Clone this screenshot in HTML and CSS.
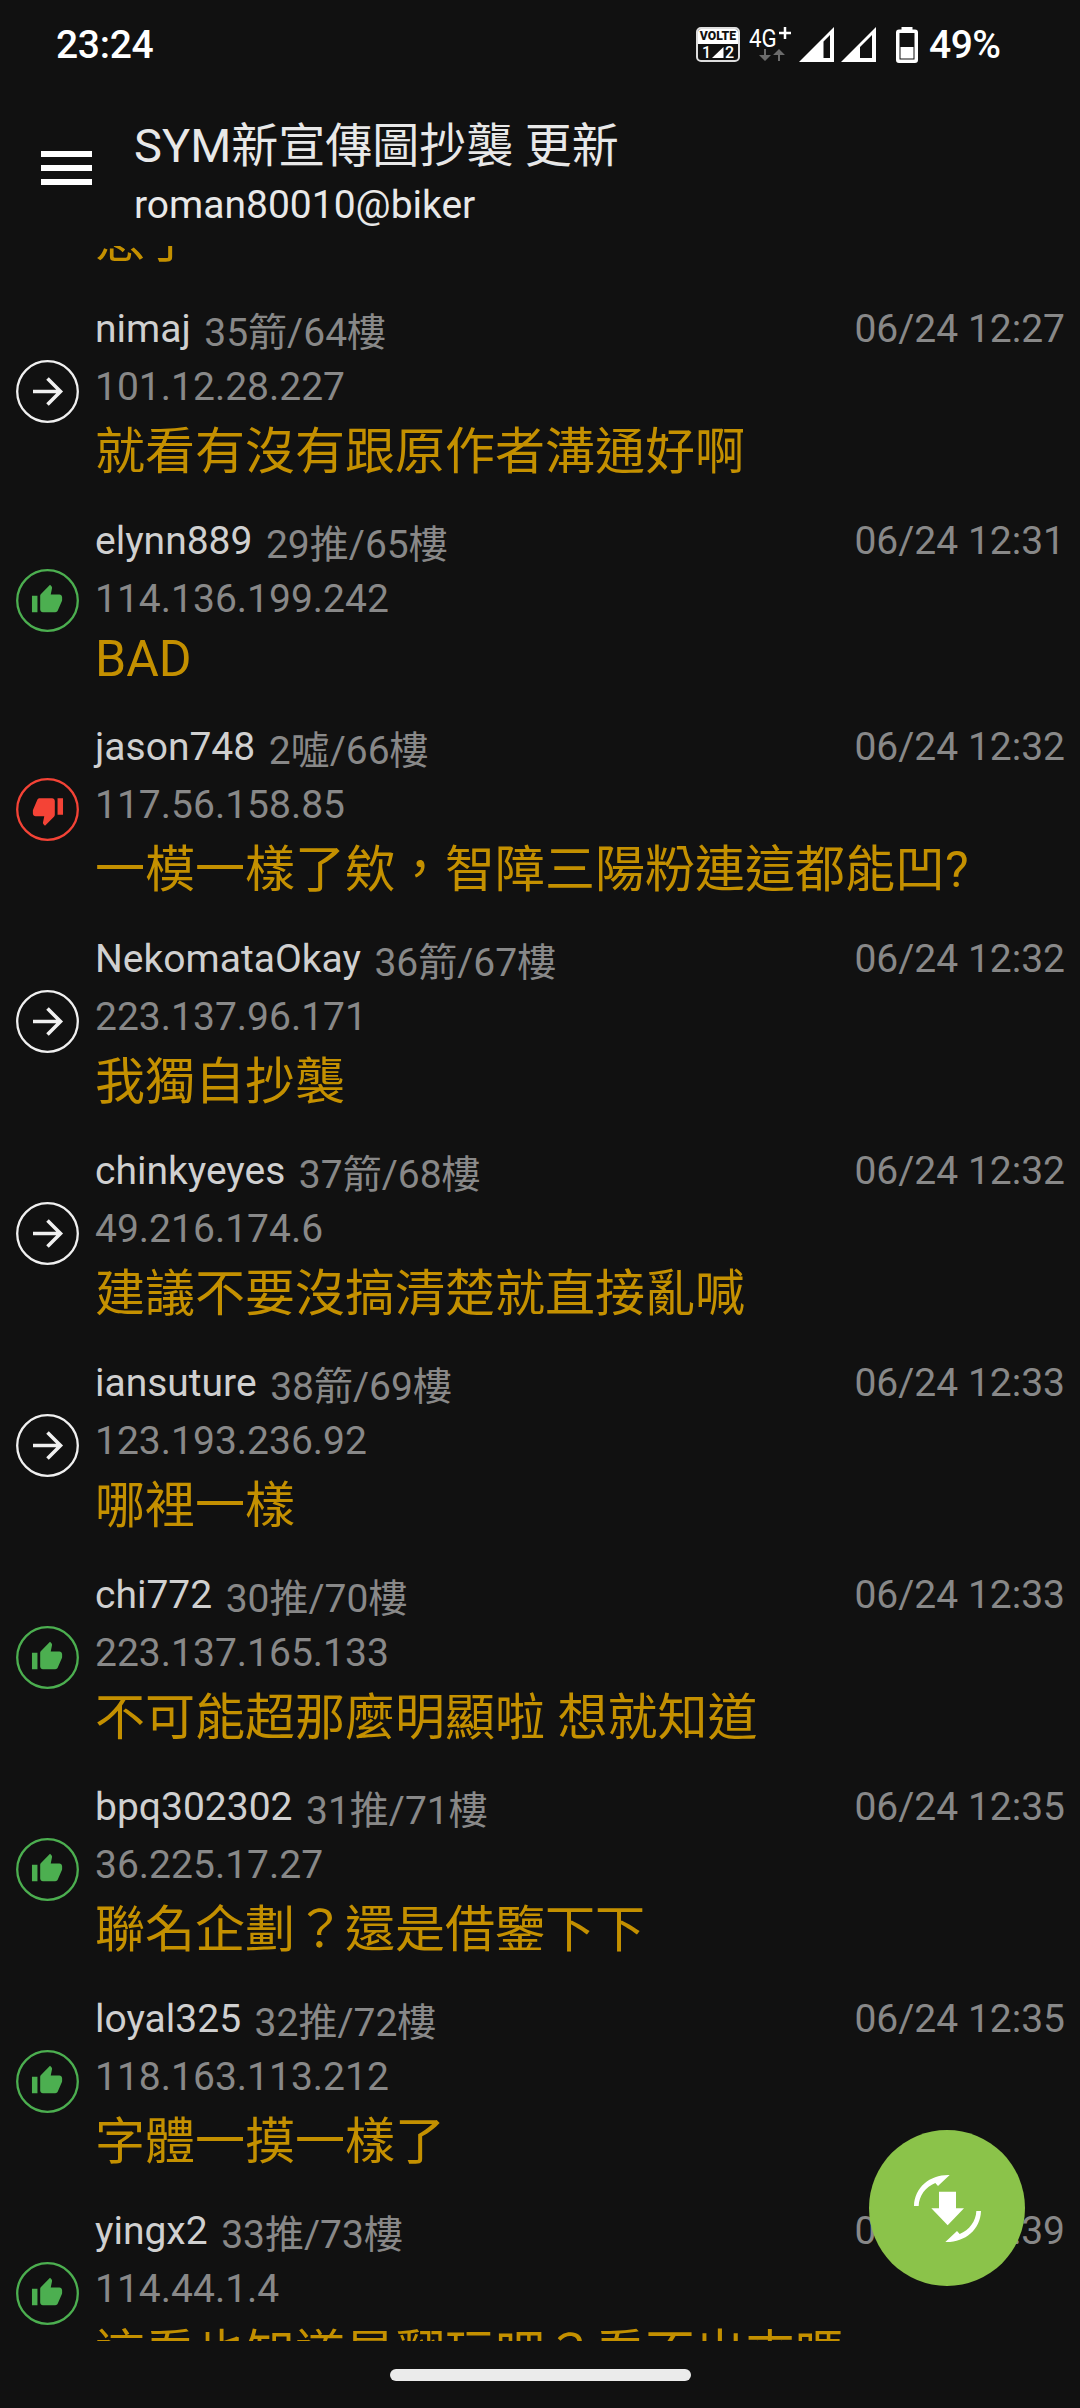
FILE: index.html
```
<!DOCTYPE html>
<html lang="zh-Hant">
<head>
<meta charset="utf-8">
<title>SYM新宣傳圖抄襲 更新</title>
<link rel="stylesheet" href="styles.css">
</head>
<body>
<svg class="defs" width="0" height="0">
  <symbol id="arrow" viewBox="0 0 63 63">
    <circle cx="31.5" cy="31.5" r="30.3" fill="none" stroke="currentColor" stroke-width="2.3"/>
    <path d="M17 31.5H44M31.5 18.5L44.5 31.5L31.5 44.5" fill="none" stroke="currentColor" stroke-width="3.6"/>
  </symbol>
  <symbol id="up" viewBox="0 0 63 63">
    <circle cx="31.5" cy="31.5" r="30.3" fill="none" stroke="currentColor" stroke-width="2.3"/>
    <path transform="translate(14.6 14.5) scale(1.37)" d="M1 21h4V9H1v12zm22-11c0-1.100-.9-2-2-2h-6.310l.95-4.570.03-.32c0-.41-.17-.79-.44-1.060L14.170 1 7.590 7.590C7.220 7.950 7 8.450 7 9v10c0 1.100.9 2 2 2h9c.83 0 1.540-.5 1.840-1.220l3.020-7.050c.09-.23.14-.47.14-.73v-2z" fill="currentColor"/>
  </symbol>
  <symbol id="down" viewBox="0 0 63 63">
    <circle cx="31.5" cy="31.5" r="30.3" fill="none" stroke="currentColor" stroke-width="2.3"/>
    <path transform="translate(48.4 49.1) scale(-1.37)" d="M1 21h4V9H1v12zm22-11c0-1.100-.9-2-2-2h-6.310l.95-4.570.03-.32c0-.41-.17-.79-.44-1.060L14.170 1 7.590 7.590C7.220 7.950 7 8.450 7 9v10c0 1.100.9 2 2 2h9c.83 0 1.540-.5 1.840-1.220l3.020-7.050c.09-.23.14-.47.14-.73v-2z" fill="currentColor"/>
  </symbol>
</svg>
<div class="screen">
  <div class="statusbar">
    <span class="clock">23:24</span>
    <div class="volte"><span class="volte-label">VOLTE</span><span class="volte-sims"><span>1</span><svg width="12" height="11"><path d="M0 11L11.500 0V11z" fill="#fff"/></svg><span>2</span></span></div>
    <div class="network"><div class="gen"><span>4G</span><svg width="12" height="12" viewBox="0 0 12 12"><path d="M6 0V12M0 6H12" stroke="#fff" stroke-width="2.500"/></svg></div>
      <svg class="traffic" width="26" height="12" viewBox="0 0 26 12" fill="#6b6b6b"><path d="M5 0h2v6H12L6 12 0 6h5zM19 12h2V6H26L20 0l-6 6h5z"/></svg>
    </div>
    <svg class="signal" width="35" height="35" viewBox="0 0 35 35"><path fill="#fff" fill-rule="evenodd" d="M0 35L35 0V35zM24.500 14.500V31H31V8z"/></svg>
    <svg class="signal second" width="35" height="35" viewBox="0 0 35 35"><path fill="#fff" fill-rule="evenodd" d="M0 35L35 0V35zM19 20V31H31V8z"/></svg>
    <svg class="battery" width="22" height="36" viewBox="0 0 22 36"><path fill="#fff" fill-rule="evenodd" d="M5.500 0h11v2.500h2.500q3 0 3 3v27.500q0 3-3 3H3q-3 0-3-3V5.500q0-3 3-3h2.500zM3.500 6V32.500H18.500V6z"/><path fill="#fff" d="M4.500 20h13v11.500h-13z"/></svg>
    <span class="percent">49%</span>
  </div>
  <header class="topbar">
    <div class="menu"><i></i><i></i><i></i></div>
    <div class="heading">
      <div class="title">SYM新宣傳圖抄襲 更新</div>
      <div class="subtitle">roman80010@biker</div>
    </div>
  </header>
  <main class="comments">
    <div class="leading"><p class="msg">急了</p></div>
    <article class="row"><svg class="badge plain"><use href="#arrow"/></svg><div class="body"><div class="meta"><span class="name">nimaj</span><span class="floor">35箭/64樓</span><time>06/24 12:27</time></div><div class="ip">101.12.28.227</div><p class="msg">就看有沒有跟原作者溝通好啊</p></div></article>
    <article class="row"><svg class="badge push"><use href="#up"/></svg><div class="body"><div class="meta"><span class="name">elynn889</span><span class="floor">29推/65樓</span><time>06/24 12:31</time></div><div class="ip">114.136.199.242</div><p class="msg latin">BAD</p></div></article>
    <article class="row"><svg class="badge boo"><use href="#down"/></svg><div class="body"><div class="meta"><span class="name">jason748</span><span class="floor">2噓/66樓</span><time>06/24 12:32</time></div><div class="ip">117.56.158.85</div><p class="msg">一模一樣了欸，智障三陽粉連這都能凹?</p></div></article>
    <article class="row"><svg class="badge plain"><use href="#arrow"/></svg><div class="body"><div class="meta"><span class="name">NekomataOkay</span><span class="floor">36箭/67樓</span><time>06/24 12:32</time></div><div class="ip">223.137.96.171</div><p class="msg">我獨自抄襲</p></div></article>
    <article class="row"><svg class="badge plain"><use href="#arrow"/></svg><div class="body"><div class="meta"><span class="name">chinkyeyes</span><span class="floor">37箭/68樓</span><time>06/24 12:32</time></div><div class="ip">49.216.174.6</div><p class="msg">建議不要沒搞清楚就直接亂喊</p></div></article>
    <article class="row"><svg class="badge plain"><use href="#arrow"/></svg><div class="body"><div class="meta"><span class="name">iansuture</span><span class="floor">38箭/69樓</span><time>06/24 12:33</time></div><div class="ip">123.193.236.92</div><p class="msg">哪裡一樣</p></div></article>
    <article class="row"><svg class="badge push"><use href="#up"/></svg><div class="body"><div class="meta"><span class="name">chi772</span><span class="floor">30推/70樓</span><time>06/24 12:33</time></div><div class="ip">223.137.165.133</div><p class="msg">不可能超那麼明顯啦 想就知道</p></div></article>
    <article class="row"><svg class="badge push"><use href="#up"/></svg><div class="body"><div class="meta"><span class="name">bpq302302</span><span class="floor">31推/71樓</span><time>06/24 12:35</time></div><div class="ip">36.225.17.27</div><p class="msg">聯名企劃？還是借鑒下下</p></div></article>
    <article class="row"><svg class="badge push"><use href="#up"/></svg><div class="body"><div class="meta"><span class="name">loyal325</span><span class="floor">32推/72樓</span><time>06/24 12:35</time></div><div class="ip">118.163.113.212</div><p class="msg">字體一摸一樣了</p></div></article>
    <article class="row"><svg class="badge push"><use href="#up"/></svg><div class="body"><div class="meta"><span class="name">yingx2</span><span class="floor">33推/73樓</span><time>06/24 12:39</time></div><div class="ip">114.44.1.4</div><p class="msg">這看也知道是翻玩吧？看不出來嗎</p></div></article>
  </main>
  <footer class="navbar"><div class="pill"></div></footer>
  <div class="fab">
    <svg width="156" height="156" viewBox="0 0 468 468" fill="#fff">
      <path d="M210 185H261V235H285L236 286L187 235H210z"/>
      <path id="sweep" d="M135 228C137 170 185 133 242 135L207 168L199 159C170 170 150 198 149 228z"/>
      <use href="#sweep" transform="rotate(180 235.500 235.500)"/>
    </svg>
  </div>
</div>
</body>
</html>
```
FILE: styles.css
```
* { box-sizing: border-box; }
body { margin: 0; background: #111; }
.defs { display: block; position: absolute; }
.screen {
  position: relative;
  width: 1080px;
  height: 2408px;
  display: flex;
  flex-direction: column;
  overflow: hidden;
  background: #111;
  color: #ccc;
  font-family: Roboto, "Noto Sans CJK TC", sans-serif;
  font-size: 39px;
  line-height: 46px;
  white-space: nowrap;
}
.statusbar {
  flex: none;
  height: 89px;
  display: flex;
  align-items: flex-start;
  padding: 22px 0 0 56px;
  color: #fff;
  font-weight: 500;
}
.clock { width: 640px; letter-spacing: -0.3px; }
.volte {
  width: 44px;
  height: 35px;
  margin-top: 5px;
  border: 2px solid #ddd;
  border-radius: 5px;
  overflow: hidden;
}
.volte-label {
  display: block;
  height: 15px;
  background: #fff;
  color: #111;
  font-size: 12.2px;
  font-weight: 900;
  line-height: 15px;
  text-align: center;
}
.volte-sims {
  display: flex;
  justify-content: center;
  align-items: center;
  gap: 1px;
  height: 17px;
  font-size: 16px;
  line-height: 17px;
}
.network {
  width: 44px;
  margin: 4px 0 0 9px;
}
.gen {
  display: flex;
  height: 23px;
  font-size: 26.5px;
  font-weight: 400;
  line-height: 23px;
}
.gen span { width: 30px; transform: scaleX(0.84); transform-origin: 0 0; }
.gen svg { margin-top: 1px; }
.traffic { display: block; margin-left: 10px; }
.signal { margin: 5px 0 0 6px; }
.signal.second { margin-left: 7px; }
.battery { margin: 5px 0 0 20px; }
.percent { margin-left: 11px; letter-spacing: -0.5px; }

.topbar {
  flex: none;
  height: 157px;
  display: flex;
  padding-left: 41px;
  color: #e8e8e8;
}
.menu {
  width: 51px;
  margin: 62px 42px 0 0;
  display: flex;
  flex-direction: column;
  gap: 8px;
}
.menu i { display: block; height: 6px; background: #fff; }
.title { margin-top: 30px; font-size: 47px; line-height: 54px; }
.subtitle { margin-top: 9px; }

.comments {
  flex: none;
  height: 2095px;
  overflow: hidden;
}
.leading {
  height: 40px;
  padding-left: 95px;
  display: flex;
  align-items: flex-end;
  overflow: hidden;
}
.leading .msg { height: 60px; line-height: 28px; }
.row {
  display: flex;
  align-items: center;
  padding: 0 15px 0 16px;
}
.badge { flex: none; width: 63px; height: 64px; padding-bottom: 1px; margin-right: 16px; }
.plain { color: #f0f0f0; }
.push { color: #4caf50; }
.boo { color: #f44336; }
.body { flex: 1; padding-top: 20px; }
.meta { display: flex; height: 58px; color: #888; }
.name { color: #d0d0d0; }
.floor { margin: 4px 0 0 13.5px; }
time { margin-left: auto; }
.ip { color: #888; height: 54px; }
.msg {
  margin: 0;
  height: 80px;
  color: #c49000;
  font-size: 50px;
  line-height: 68px;
}
.msg.latin { height: 74px; line-height: 58px; }

.navbar {
  flex: 1;
  display: flex;
  justify-content: center;
  align-items: flex-start;
  padding-top: 28px;
}
.pill { width: 301px; height: 11.500px; border-radius: 6px; background: #ebebeb; }
.fab {
  position: absolute;
  left: 869px;
  top: 2130px;
  width: 156px;
  height: 156px;
  border-radius: 50%;
  background: #8bc34a;
}
.fab svg { display: block; }
```
